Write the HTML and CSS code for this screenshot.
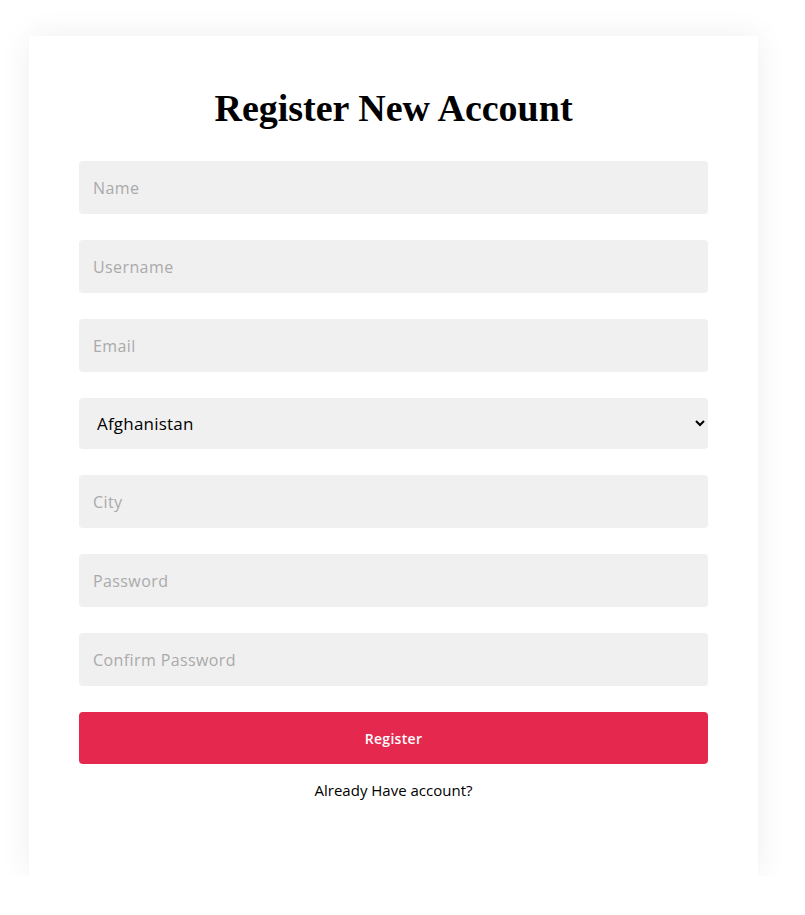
FILE: index.html
```html
<!DOCTYPE html>
<html>
	<head>
		<meta charset="utf-8">
		<title>Register</title>
		<link rel="stylesheet" href="styles.css">
	</head>
	<body>
        <div class="card">
            <h1 class="title">Register New Account</h1>
            <form class="form">
                <input type="text" placeholder="Name">
                <input type="text" placeholder="Username">
                <input type="email" placeholder="Email">
                <select>
                    <option>Afghanistan</option>
                    <option>Albania</option>
                    <option>Algeria</option>
                </select>
                <input type="text" placeholder="City">
                <input type="password" placeholder="Password">
                <input type="password" placeholder="Confirm Password">
                <button type="button" class="btn">Register</button>
            </form>
            <a href="javascript:void(0)" class="login">Already Have account?</a>
        </div>
	</body>
</html>
```

FILE: styles.css
```css
*{
    padding: 0;
    margin: 0;
    box-sizing: border-box;
}
a {
    text-decoration:none;
}
body {
    background:#fff;
    font-family:"Open Sans", "Liberation Sans", sans-serif;
    padding:36px 0 0 29px;
}
.card {
    width:729px;
    height:840px;
    background:#fff;
    box-shadow:0 0 30px rgba(0,0,0,0.07);
    padding:50px 50px 0;
    text-align:center;
}
.title {
    font-family:"Liberation Serif", serif;
    font-weight:700;
    font-size:38px;
    line-height:44px;
    color:#000;
    margin-bottom:31px;
}
.form {
    display:flex;
    flex-direction:column;
    gap:26px;
}
.form input,
.form select {
    width:100%;
    height:53px;
    border:none;
    outline:none;
    border-radius:4px;
    background:#f0f0f0;
    padding:0 14px;
    font-family:inherit;
    font-size:16px;
    letter-spacing:0.4px;
    color:#000;
}
.form input::placeholder {
    color:#aaa;
}
.form select {
    height:51px;
    padding:0 12px 0 14px;
    font-size:17px;
    letter-spacing:0.2px;
}
.btn {
    height:52px;
    border:none;
    border-radius:4px;
    background:#e5284d;
    color:#fff;
    font-family:inherit;
    font-weight:600;
    font-size:14px;
    letter-spacing:0.3px;
    cursor:pointer;
}
.login {
    display:block;
    margin-top:16px;
    font-size:15px;
    color:#000;
}
```
